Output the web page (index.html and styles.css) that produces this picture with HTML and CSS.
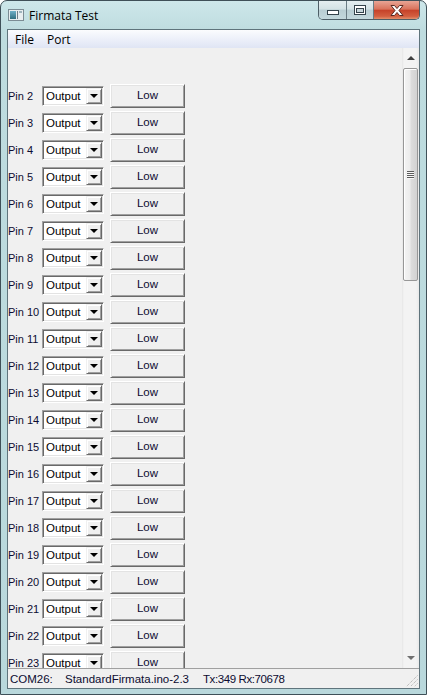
FILE: index.html
```html
<!DOCTYPE html>
<html>
<head>
<meta charset="utf-8">
<title>Firmata Test</title>
<link rel="stylesheet" href="styles.css">
</head>
<body>
<div class="window">
  <div class="titlebar">
    <svg class="app-icon" width="16" height="12" viewBox="0 0 16 12">
      <defs>
        <linearGradient id="ig" x1="0" y1="0" x2="0" y2="1">
          <stop offset="0" stop-color="#6fb0c8"/>
          <stop offset="1" stop-color="#2f6f80"/>
        </linearGradient>
      </defs>
      <rect x="0.5" y="0.5" width="15" height="11" fill="#e8eef0" stroke="#7c8c94"/>
      <rect x="2" y="2" width="6" height="8" fill="url(#ig)"/>
      <rect x="9" y="2" width="1" height="8" fill="#6e7f88"/>
      <rect x="11" y="2" width="3" height="2" fill="#9fb4bd"/>
    </svg>
    <span class="title">Firmata Test</span>
    <div class="caption">
      <div class="cbtn min">
        <svg width="12" height="5" viewBox="0 0 12 5"><rect x="0.5" y="0.5" width="11" height="4" fill="#fff" stroke="#34434b"/></svg>
      </div>
      <div class="cbtn max">
        <svg width="12" height="10" viewBox="0 0 12 10"><rect x="0.5" y="0.5" width="11" height="9" fill="#fff" stroke="#34434b"/><rect x="2.5" y="3.5" width="7" height="4" fill="#c7d6da" stroke="#34434b"/></svg>
      </div>
      <div class="cbtn close">
        <svg width="14" height="11" viewBox="0 0 14 11"><path d="M1 0.5 H4.5 L7 3.5 L9.5 0.5 H13 L9 5.5 L13 10.5 H9.5 L7 7.5 L4.5 10.5 H1 L5 5.5 Z" fill="#fff" stroke="#5a2a22" stroke-width="1" stroke-linejoin="round"/></svg>
      </div>
    </div>
  </div>
  <div class="client">
    <div class="menubar"><span>File</span><span>Port</span></div>
    <div class="main">
      <div class="pins">
        <div class="row"><span class="lbl">Pin 2</span><div class="combo"><span class="val">Output</span><span class="drop"><i class="tri"></i></span></div><div class="btn">Low</div></div>
        <div class="row"><span class="lbl">Pin 3</span><div class="combo"><span class="val">Output</span><span class="drop"><i class="tri"></i></span></div><div class="btn">Low</div></div>
        <div class="row"><span class="lbl">Pin 4</span><div class="combo"><span class="val">Output</span><span class="drop"><i class="tri"></i></span></div><div class="btn">Low</div></div>
        <div class="row"><span class="lbl">Pin 5</span><div class="combo"><span class="val">Output</span><span class="drop"><i class="tri"></i></span></div><div class="btn">Low</div></div>
        <div class="row"><span class="lbl">Pin 6</span><div class="combo"><span class="val">Output</span><span class="drop"><i class="tri"></i></span></div><div class="btn">Low</div></div>
        <div class="row"><span class="lbl">Pin 7</span><div class="combo"><span class="val">Output</span><span class="drop"><i class="tri"></i></span></div><div class="btn">Low</div></div>
        <div class="row"><span class="lbl">Pin 8</span><div class="combo"><span class="val">Output</span><span class="drop"><i class="tri"></i></span></div><div class="btn">Low</div></div>
        <div class="row"><span class="lbl">Pin 9</span><div class="combo"><span class="val">Output</span><span class="drop"><i class="tri"></i></span></div><div class="btn">Low</div></div>
        <div class="row"><span class="lbl">Pin 10</span><div class="combo"><span class="val">Output</span><span class="drop"><i class="tri"></i></span></div><div class="btn">Low</div></div>
        <div class="row"><span class="lbl">Pin 11</span><div class="combo"><span class="val">Output</span><span class="drop"><i class="tri"></i></span></div><div class="btn">Low</div></div>
        <div class="row"><span class="lbl">Pin 12</span><div class="combo"><span class="val">Output</span><span class="drop"><i class="tri"></i></span></div><div class="btn">Low</div></div>
        <div class="row"><span class="lbl">Pin 13</span><div class="combo"><span class="val">Output</span><span class="drop"><i class="tri"></i></span></div><div class="btn">Low</div></div>
        <div class="row"><span class="lbl">Pin 14</span><div class="combo"><span class="val">Output</span><span class="drop"><i class="tri"></i></span></div><div class="btn">Low</div></div>
        <div class="row"><span class="lbl">Pin 15</span><div class="combo"><span class="val">Output</span><span class="drop"><i class="tri"></i></span></div><div class="btn">Low</div></div>
        <div class="row"><span class="lbl">Pin 16</span><div class="combo"><span class="val">Output</span><span class="drop"><i class="tri"></i></span></div><div class="btn">Low</div></div>
        <div class="row"><span class="lbl">Pin 17</span><div class="combo"><span class="val">Output</span><span class="drop"><i class="tri"></i></span></div><div class="btn">Low</div></div>
        <div class="row"><span class="lbl">Pin 18</span><div class="combo"><span class="val">Output</span><span class="drop"><i class="tri"></i></span></div><div class="btn">Low</div></div>
        <div class="row"><span class="lbl">Pin 19</span><div class="combo"><span class="val">Output</span><span class="drop"><i class="tri"></i></span></div><div class="btn">Low</div></div>
        <div class="row"><span class="lbl">Pin 20</span><div class="combo"><span class="val">Output</span><span class="drop"><i class="tri"></i></span></div><div class="btn">Low</div></div>
        <div class="row"><span class="lbl">Pin 21</span><div class="combo"><span class="val">Output</span><span class="drop"><i class="tri"></i></span></div><div class="btn">Low</div></div>
        <div class="row"><span class="lbl">Pin 22</span><div class="combo"><span class="val">Output</span><span class="drop"><i class="tri"></i></span></div><div class="btn">Low</div></div>
        <div class="row"><span class="lbl">Pin 23</span><div class="combo"><span class="val">Output</span><span class="drop"><i class="tri"></i></span></div><div class="btn">Low</div></div>
      </div>
      <div class="vscroll">
        <div class="arrow up"><i class="atri up"></i></div>
        <div class="thumb"><div class="grip"><i></i><i></i><i></i><i></i></div></div>
        <div class="track"></div>
        <div class="arrow down"><i class="atri down"></i></div>
      </div>
    </div>
    <div class="status">
      <span class="s1">COM26:</span>
      <span class="s2">StandardFirmata.ino-2.3</span>
      <span class="s3">Tx:349 Rx:70678</span>
      <svg class="sizegrip" width="12" height="12" viewBox="0 0 12 12">
        <g stroke="#a9a9a9" stroke-width="1" stroke-dasharray="1 1">
          <line x1="11.5" y1="0.5" x2="0.5" y2="11.5"/>
          <line x1="11.5" y1="4.5" x2="4.5" y2="11.5"/>
          <line x1="11.5" y1="8.5" x2="8.5" y2="11.5"/>
        </g>
      </svg>
    </div>
  </div>
</div>
</body>
</html>
```

FILE: styles.css
```css
html, body {
  margin: 0;
  padding: 0;
  background: #ffffff;
}

.window {
  width: 427px;
  height: 695px;
  box-sizing: border-box;
  border: 1px solid #3f5058;
  border-radius: 7px 7px 0 0;
  background: linear-gradient(to bottom, #cde7ea 0px, #bedcdf 30px, #b9d8dc 100%);
  padding: 0 6px 5px 6px;
  display: flex;
  flex-direction: column;
  overflow: hidden;
}

.titlebar {
  height: 28px;
  display: flex;
  align-items: center;
  flex: none;
}

.app-icon {
  margin-left: 1px;
  flex: none;
}

.title {
  margin-left: 5px;
  font-family: "Open Sans", "Noto Sans", sans-serif;
  font-size: 12px;
  color: #000000;
  margin-top: 1px;
}

.caption {
  margin-left: auto;
  align-self: flex-start;
  display: flex;
  height: 19px;
  box-sizing: border-box;
  border: 1px solid #4d5e66;
  border-top: none;
  border-radius: 0 0 5px 5px;
  overflow: hidden;
}

.cbtn {
  height: 18px;
  display: flex;
  align-items: center;
  justify-content: center;
  box-sizing: border-box;
}

.cbtn.min {
  width: 28px;
  background: linear-gradient(to bottom, #e4eef0 0%, #d3e2e5 45%, #b9ced3 50%, #c3d8dc 100%);
  border-right: 1px solid #6a7c84;
  padding-top: 5px;
}

.cbtn.max {
  width: 27px;
  background: linear-gradient(to bottom, #e4eef0 0%, #d3e2e5 45%, #b9ced3 50%, #c3d8dc 100%);
  border-right: 1px solid #6a7c84;
}

.cbtn.close {
  width: 45px;
  background: linear-gradient(to bottom, #e8a595 0%, #d9735c 45%, #c6432a 52%, #d35f40 85%, #e2906c 100%);
}

.client {
  flex: 1;
  display: flex;
  flex-direction: column;
  border: 1px solid #5f747c;
  background: #f0f0f0;
  min-height: 0;
}

.menubar {
  height: 18px;
  flex: none;
  display: flex;
  align-items: center;
  gap: 13px;
  padding-left: 7px;
  background: linear-gradient(to bottom, #fbfcfe 0%, #eef1fa 45%, #dfe5f4 100%);
  font-family: "Open Sans", "Noto Sans", sans-serif;
  font-size: 12px;
  color: #000000;
}

.main {
  flex: 1;
  display: flex;
  min-height: 0;
  overflow: hidden;
}

.pins {
  flex: 1;
  padding-top: 34px;
  overflow: hidden;
  font-family: "Liberation Sans", Arial, sans-serif;
  font-size: 11px;
  color: #0c0c30;
}

.row {
  height: 27px;
  display: flex;
  align-items: center;
}

.lbl {
  width: 34px;
  flex: none;
  white-space: nowrap;
}

.combo {
  width: 62px;
  height: 20px;
  box-sizing: border-box;
  flex: none;
  display: flex;
  background: #ffffff;
  border-top: 1px solid #a0a0a0;
  border-left: 1px solid #a0a0a0;
  border-right: 1px solid #ffffff;
  border-bottom: 1px solid #ffffff;
  box-shadow: inset 1px 1px 0 #696969, inset -1px -1px 0 #e3e3e3;
  padding: 1px;
}

.val {
  flex: 1;
  padding-left: 2px;
  line-height: 16px;
  font-size: 11.5px;
  color: #000000;
}

.drop {
  width: 16px;
  height: 16px;
  box-sizing: border-box;
  background: #f0f0f0;
  border-top: 1px solid #f0f0f0;
  border-left: 1px solid #f0f0f0;
  border-right: 1px solid #696969;
  border-bottom: 1px solid #696969;
  box-shadow: inset 1px 1px 0 #ffffff, inset -1px -1px 0 #a0a0a0;
  display: flex;
  align-items: center;
  justify-content: center;
}

.tri {
  width: 0;
  height: 0;
  border-left: 4px solid transparent;
  border-right: 4px solid transparent;
  border-top: 4px solid #000000;
  margin-top: 1px;
}

.btn {
  width: 75px;
  height: 24px;
  box-sizing: border-box;
  flex: none;
  margin-left: 6px;
  background: #f0f0f0;
  border-top: 1px solid #ffffff;
  border-left: 1px solid #ffffff;
  border-right: 1px solid #696969;
  border-bottom: 1px solid #696969;
  box-shadow: inset 1px 1px 0 #e3e3e3, inset -1px -1px 0 #a0a0a0;
  display: flex;
  align-items: center;
  justify-content: center;
  font-size: 11.5px;
  padding-bottom: 1px;
}

.vscroll {
  width: 17px;
  flex: none;
  display: flex;
  flex-direction: column;
  background: linear-gradient(to right, #e6e6e6 0px, #f3f3f3 2px, #f3f3f3 14px, #e9e9e9 17px);
}

.arrow {
  height: 20px;
  flex: none;
  display: flex;
  align-items: center;
  justify-content: center;
}

.atri.up {
  width: 0;
  height: 0;
  border-left: 4px solid transparent;
  border-right: 4px solid transparent;
  border-bottom: 4px solid #404040;
}

.atri.down {
  width: 0;
  height: 0;
  border-left: 4px solid transparent;
  border-right: 4px solid transparent;
  border-top: 4px solid #707070;
}

.thumb {
  height: 213px;
  flex: none;
  margin: 0 1px;
  box-sizing: border-box;
  border: 1px solid #979797;
  border-radius: 2px;
  background: linear-gradient(to right, #f4f4f4 0%, #ececec 45%, #dcdcdc 55%, #d2d2d2 100%);
  box-shadow: inset 1px 1px 0 #ffffff;
  display: flex;
  align-items: center;
  justify-content: center;
}

.grip {
  display: flex;
  flex-direction: column;
  gap: 1px;
  margin-right: 1px;
}

.grip i {
  display: block;
  width: 7px;
  height: 1px;
  background: #5c5c5c;
  box-shadow: 0 1px 0 #f8f8f8;
}

.track {
  flex: 1;
}

.status {
  height: 20px;
  flex: none;
  box-sizing: border-box;
  border-top: 1px solid #a0a0a0;
  display: flex;
  align-items: center;
  padding-left: 2px;
  font-family: "Liberation Sans", Arial, sans-serif;
  font-size: 11.5px;
  color: #0c0c30;
}

.s1 {
  width: 55px;
  flex: none;
}

.s2 {
  width: 138px;
  flex: none;
}

.s3 {
  flex: 1;
  letter-spacing: -0.4px;
}

.sizegrip {
  align-self: flex-end;
  margin-right: 1px;
  margin-bottom: 1px;
}
```
